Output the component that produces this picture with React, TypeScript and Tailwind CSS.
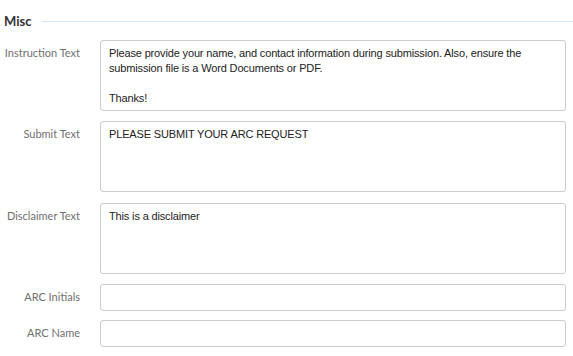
const label =
  "w-[80px] shrink-0 whitespace-nowrap text-right text-[11px] text-[#707070] font-['Lato',sans-serif]";
const box =
  "ml-[20px] w-[466px] rounded-[3px] border border-[#ccc] bg-white px-[8px] text-[11px] tracking-[-0.15px] leading-[15px] text-[#222] font-['Liberation_Sans',Arial,sans-serif]";

function AreaRow({ name, text }: { name: string; text: string }) {
  return (
    <div className="flex items-start">
      <div className={`${label} pt-[5px]`}>{name}</div>
      <div className={`${box} h-[71px] whitespace-pre-wrap py-[5px]`}>{text}</div>
    </div>
  );
}

function InputRow({ name }: { name: string }) {
  return (
    <div className="flex items-center">
      <div className={label}>{name}</div>
      <div className={`${box} h-[27px]`} />
    </div>
  );
}

export default function App() {
  return (
    <div className="h-[356px] w-[573px] overflow-hidden bg-white">
      <div className="flex items-center pl-[4px] pt-[12px]">
        <span className="text-[13px] font-bold text-[#333] font-['Lato',sans-serif]">Misc</span>
        <div className="ml-[11px] h-px flex-1 bg-[#d3e4fa]" />
      </div>
      <div className="mt-[8px] flex flex-col">
        <AreaRow
          name="Instruction Text"
          text={
            "Please provide your name, and contact information during submission. Also, ensure the submission file is a Word Documents or PDF.\n\nThanks!"
          }
        />
        <div className="mt-[10px]">
          <AreaRow name="Submit Text" text="PLEASE SUBMIT YOUR ARC REQUEST" />
        </div>
        <div className="mt-[11px]">
          <AreaRow name="Disclaimer Text" text="This is a disclaimer" />
        </div>
        <div className="mt-[10px]">
          <InputRow name="ARC Initials" />
        </div>
        <div className="mt-[9px]">
          <InputRow name="ARC Name" />
        </div>
      </div>
    </div>
  );
}
